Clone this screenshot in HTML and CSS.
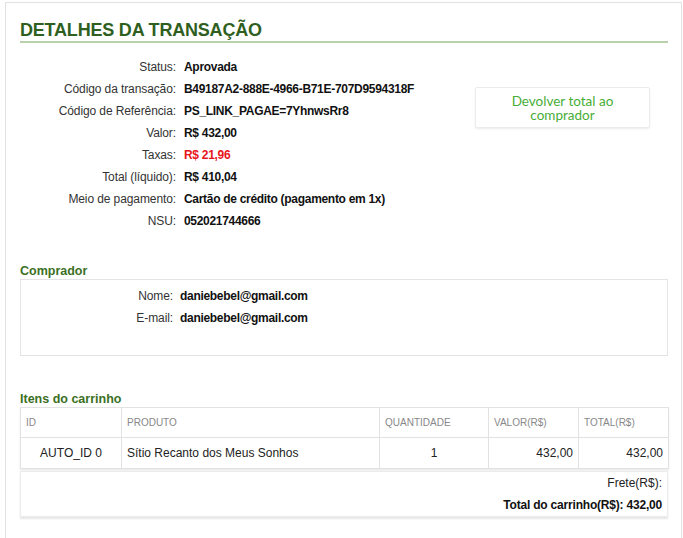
FILE: index.html
```html
<!DOCTYPE html>
<html lang="pt-BR">
<head>
    <meta charset="UTF-8">
    <meta name="viewport" content="width=device-width, initial-scale=1.0">
    <title>Detalhes da transação</title>
    <link rel="stylesheet" href="styles.css">
</head>
<body>
    <div class="container">
        <h1>DETALHES DA TRANSAÇÃO</h1>

        <div class="details">
            <dl class="info">
                <dt>Status:</dt><dd>Aprovada</dd>
                <dt>Código da transação:</dt><dd>B49187A2-888E-4966-B71E-707D9594318F</dd>
                <dt>Código de Referência:</dt><dd>PS_LINK_PAGAE=7YhnwsRr8</dd>
                <dt>Valor:</dt><dd>R$ 432,00</dd>
                <dt>Taxas:</dt><dd class="fee">R$ 21,96</dd>
                <dt>Total (líquido):</dt><dd>R$ 410,04</dd>
                <dt>Meio de pagamento:</dt><dd>Cartão de crédito (pagamento em 1x)</dd>
                <dt>NSU:</dt><dd>052021744666</dd>
            </dl>
            <button class="refund">Devolver total ao comprador</button>
        </div>

        <h2>Comprador</h2>
        <div class="buyer">
            <dl class="info buyer-info">
                <dt>Nome:</dt><dd>daniebebel@gmail.com</dd>
                <dt>E-mail:</dt><dd>daniebebel@gmail.com</dd>
            </dl>
        </div>

        <h2 class="cart-title">Itens do carrinho</h2>
        <table class="cart">
            <colgroup>
                <col class="col-id">
                <col class="col-product">
                <col class="col-qty">
                <col class="col-price">
                <col class="col-total">
            </colgroup>
            <thead>
                <tr>
                    <th>ID</th>
                    <th>PRODUTO</th>
                    <th>QUANTIDADE</th>
                    <th>VALOR(R$)</th>
                    <th>TOTAL(R$)</th>
                </tr>
            </thead>
            <tbody>
                <tr>
                    <td class="center">AUTO_ID 0</td>
                    <td>Sítio Recanto dos Meus Sonhos</td>
                    <td class="center">1</td>
                    <td class="right">432,00</td>
                    <td class="right">432,00</td>
                </tr>
            </tbody>
        </table>

        <div class="cart-footer">
            <div>Frete(R$):</div>
            <div class="cart-total">Total do carrinho(R$): 432,00</div>
        </div>
    </div>
</body>
</html>
```

FILE: styles.css
```css
body {
    font-family: "Liberation Sans", Arial, sans-serif;
    font-size: 12px;
    color: #222;
    margin: 0;
    padding: 2px 1px 0 5px;
    background: white;
}
.container {
    border: 1px solid #e2e2e2;
    border-bottom: none;
    padding: 16px 13px 20px 14px;
    min-height: 520px;
}
h1 {
    margin: 0;
    font-size: 18px;
    line-height: 22px;
    letter-spacing: -0.2px;
    color: #2f5f1f;
    border-bottom: 2px solid #b9d0ad;
}
.details {
    display: flex;
    align-items: flex-start;
    margin-top: 13px;
}
.info {
    display: grid;
    grid-template-columns: 156px auto;
    column-gap: 8px;
    margin: 0;
    line-height: 22px;
    flex: 1;
}
.info dt {
    text-align: right;
    color: #333;
    letter-spacing: -0.1px;
}
.info dd {
    margin: 0;
    font-weight: bold;
    color: #111;
    letter-spacing: -0.3px;
}
.info .fee {
    color: #e8141b;
}
.refund {
    width: 175px;
    height: 41px;
    margin: 31px 18px 0 0;
    background: white;
    border: 1px solid #ececec;
    border-radius: 2px;
    box-shadow: 0 1px 2px rgba(0,0,0,0.08);
    font-family: Lato, "Open Sans", sans-serif;
    font-size: 13.5px;
    line-height: 14px;
    color: #47ad36;
    padding: 4px 30px;
}
h2 {
    margin: 31px 0 0;
    font-size: 12.5px;
    line-height: 16px;
    color: #3b7024;
}
.buyer {
    border: 1px solid #e4e4e4;
    padding: 5px 0 26px;
}
.buyer-info {
    grid-template-columns: 152px auto;
    column-gap: 7px;
}
.cart-title {
    margin-top: 35px;
}
.cart {
    width: 100%;
    table-layout: fixed;
    border-collapse: collapse;
    box-shadow: 0 2px 2px rgba(0,0,0,0.08);
}
.col-id { width: 101px; }
.col-product { width: 258px; }
.col-qty { width: 109px; }
.col-price { width: 90px; }
.col-total { width: 90px; }
.cart th,
.cart td {
    border: 1px solid #e2e2e2;
    padding: 0 5px;
    text-align: left;
}
.cart th {
    height: 29px;
    font-size: 10px;
    font-weight: normal;
    color: #888;
}
.cart td {
    height: 30px;
    color: #222;
}
.cart .center {
    text-align: center;
}
.cart .right {
    text-align: right;
}
.cart-footer {
    margin-top: 2px;
    border: 1px solid #ececec;
    box-shadow: 0 2px 2px rgba(0,0,0,0.1);
    padding: 0 5px;
    text-align: right;
    line-height: 22px;
    color: #222;
}
.cart-total {
    font-weight: bold;
    color: #111;
    letter-spacing: -0.2px;
}
```
